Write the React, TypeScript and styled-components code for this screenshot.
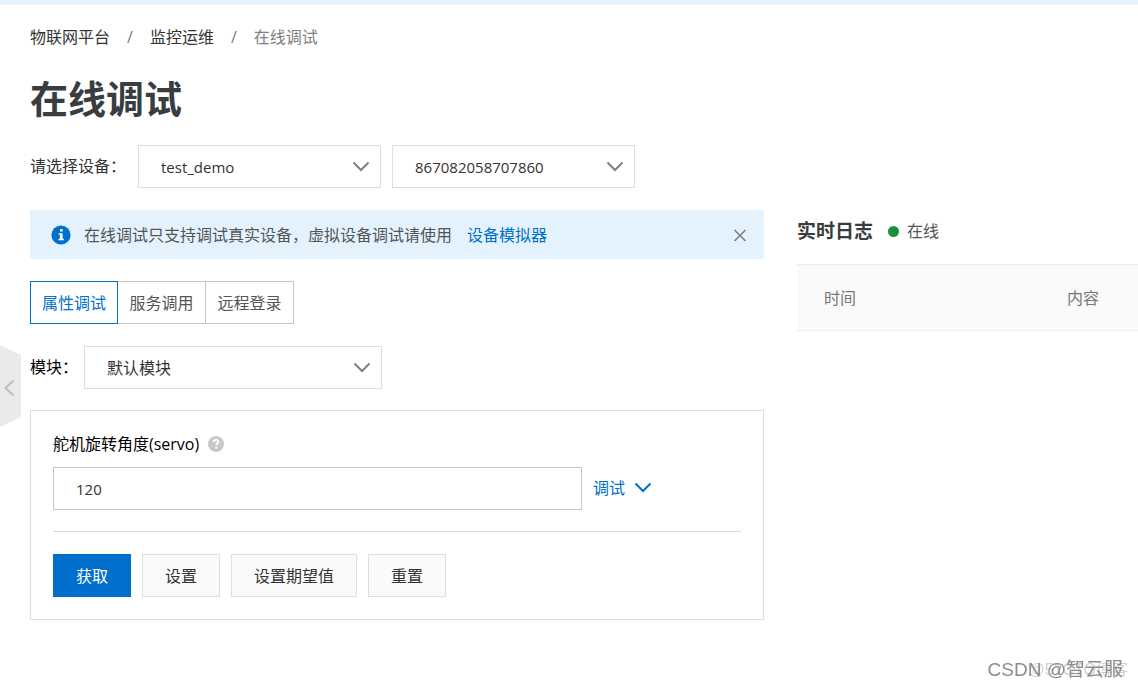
import React, { useState } from "react";
import styled, { createGlobalStyle, css } from "styled-components";

const GlobalStyle = createGlobalStyle`
  *, *::before, *::after { box-sizing: border-box; }
  body {
    margin: 0;
    background: #fff;
    color: #333;
    font-family: "Open Sans", "Noto Sans CJK SC", sans-serif;
    font-size: 16px;
    line-height: 22px;
  }
  button, input, select { font: inherit; color: inherit; margin: 0; }
  a { text-decoration: none; }
`;

const TopStrip = styled.div`
  height: 5px;
  background: #e4f2fe;
`;

const Page = styled.main`
  padding: 21px 0 22px 30px;
`;

const Breadcrumb = styled.nav`
  display: flex;
  gap: 17px;
`;

const Crumb = styled.a`
  color: #333;
`;

const CurrentCrumb = styled.span`
  color: #808080;
`;

const Slash = styled.span`
  color: #808080;
`;

const Title = styled.h1`
  margin: 24px 0 21px;
  font-size: 38px;
  line-height: 52px;
  font-weight: 700;
  color: #373d41;
`;

const FieldRow = styled.div<{ $gap: number }>`
  display: flex;
  align-items: center;
  gap: ${(p) => p.$gap}px;

  label { padding-bottom: 2px; }
`;

const SelectGroup = styled.div`
  display: flex;
  gap: 11px;
`;

const SelectBox = styled.div<{ $width: number }>`
  position: relative;
  width: ${(p) => p.$width}px;

  svg {
    position: absolute;
    right: 11px;
    top: 16px;
    pointer-events: none;
  }
`;

const Select = styled.select<{ $latin?: boolean }>`
  appearance: none;
  display: block;
  width: 100%;
  height: 43px;
  padding: 0 40px 0 22px;
  border: 1px solid #dedede;
  border-radius: 0;
  background: #fff;
  color: #333;
  font-size: ${(p) => (p.$latin ? 15 : 16)}px;
`;

const Columns = styled.div`
  display: grid;
  grid-template-columns: minmax(0, 734fr) minmax(0, 341fr);
  gap: 33px;
  margin-top: 22px;
`;

const DebugColumn = styled.section`
  display: flex;
  flex-direction: column;
`;

const Notice = styled.div`
  display: flex;
  align-items: center;
  height: 49px;
  margin-bottom: 22px;
  padding: 0 17px 0 21px;
  background: #e4f2fe;
  color: #555;
`;

const NoticeText = styled.p`
  flex: 1;
  margin: 0 0 0 13px;
`;

const NoticeLink = styled.a`
  margin-left: 15px;
  color: #0070cc;
`;

const IconButton = styled.button`
  display: flex;
  padding: 0;
  border: 0;
  background: none;
  cursor: pointer;
`;

const Tabs = styled.div`
  display: flex;
  margin-bottom: 22px;
`;

const Tab = styled.button<{ $active: boolean }>`
  min-width: 88px;
  height: 43px;
  padding: 0 11px;
  border: 1px solid #c6c6c6;
  border-left-width: 0;
  background: #fff;
  color: #555;
  cursor: pointer;
  ${(p) =>
    p.$active &&
    css`
      border-color: #0070cc;
      border-left-width: 1px;
      color: #0070cc;
    `}
`;

const ModuleLabel = styled.label`
  color: #000;
`;

const Panel = styled.form`
  margin-top: 21px;
  padding: 22px;
  border: 1px solid #dedede;
`;

const PropertyName = styled.div`
  display: flex;
  align-items: center;
  gap: 9px;
  margin-bottom: 12px;
  color: #000;
`;

const PropertyRow = styled.div`
  display: flex;
  align-items: center;
  gap: 11px;
`;

const ValueInput = styled.input`
  flex: 1;
  min-width: 0;
  height: 43px;
  padding: 0 22px;
  border: 1px solid #c6c6c6;
  border-radius: 0;
  color: #333;
  font-size: 15px;
`;

const DebugMenu = styled.button`
  display: flex;
  align-items: center;
  gap: 9px;
  width: 148px;
  padding: 0 0 2px;
  border: 0;
  background: none;
  color: #0070cc;
  cursor: pointer;
`;

const Divider = styled.hr`
  height: 1px;
  margin: 21px 0 22px;
  border: 0;
  background: #d9d9d9;
`;

const Actions = styled.div`
  display: flex;
  gap: 11px;
`;

const Action = styled.button<{ $primary?: boolean }>`
  height: 43px;
  padding: 0 22px;
  border: 1px solid ${(p) => (p.$primary ? "#0070cc" : "#dedede")};
  background: ${(p) => (p.$primary ? "#0070cc" : "#fafafa")};
  color: ${(p) => (p.$primary ? "#fff" : "#333")};
  cursor: pointer;
`;

const LogColumn = styled.section`
  min-width: 0;
`;

const LogHeader = styled.header`
  display: flex;
  align-items: center;
  height: 42px;
  margin-bottom: 12px;
`;

const LogTitle = styled.h2`
  margin: 0 15px 0 0;
  font-size: 19px;
  font-weight: 700;
  color: #373d41;
`;

const StatusDot = styled.span`
  width: 11px;
  height: 11px;
  margin-right: 8px;
  border-radius: 50%;
  background: #1e8e3e;
`;

const Status = styled.span`
  color: #555;
`;

const LogTable = styled.table`
  width: 100%;
  border-collapse: collapse;
  table-layout: fixed;

  th {
    height: 66px;
    padding: 0 0 0 27px;
    border: solid #ebebeb;
    border-width: 1px 0;
    background: #fafafa;
    color: #777;
    font-weight: 400;
    text-align: left;
  }

  th:first-child { width: 243px; }
`;

const CollapseHandle = styled.button`
  position: fixed;
  left: 0;
  top: 345px;
  padding: 0;
  border: 0;
  background: none;
  cursor: pointer;

  svg { display: block; }
`;

const Watermark = styled.div<{ $back?: boolean }>`
  position: fixed;
  right: ${(p) => (p.$back ? 10 : 15)}px;
  bottom: 6px;
  font-family: "Liberation Sans", "Noto Sans CJK SC", sans-serif;
  font-size: ${(p) => (p.$back ? 16 : 19)}px;
  line-height: 24px;
  white-space: nowrap;
  color: ${(p) => (p.$back ? "#d0d0d0" : "#8c8c8c")};
  pointer-events: none;
`;

const Chevron = ({ color = "#808080" }: { color?: string }) => (
  <svg width="18" height="11" viewBox="0 0 18 11" fill="none" aria-hidden="true">
    <path d="M1.5 1.5 9 9l7.5-7.5" stroke={color} strokeWidth="2" />
  </svg>
);

const InfoIcon = () => (
  <svg width="20" height="20" viewBox="0 0 20 20" aria-hidden="true">
    <circle cx="10" cy="10" r="9.6" fill="#0070cc" />
    <path d="M9 4.2h2.7v2.4H9zM7.6 8.2h4v5.6h1.2v1.5H7.6v-1.5h1.3V9.7H7.6z" fill="#fff" />
  </svg>
);

const HelpIcon = () => (
  <svg width="16" height="16" viewBox="0 0 16 16" fill="none" aria-hidden="true">
    <circle cx="8" cy="8" r="8" fill="#c8c8c8" />
    <path d="M5.7 6.2c0-1.5 1-2.4 2.4-2.4s2.3.8 2.3 2c0 1.6-2.2 1.7-2.2 3.4" stroke="#fff" strokeWidth="1.8" />
    <path d="M7.2 10.6h2v1.9h-2z" fill="#fff" />
  </svg>
);

const CloseIcon = () => (
  <svg width="14" height="14" viewBox="0 0 14 14" aria-hidden="true">
    <path d="m1.5 2 11 11m0-11-11 11" stroke="#808080" strokeWidth="1.7" />
  </svg>
);

const tabs = ["属性调试", "服务调用", "远程登录"];

export default function App() {
  const [activeTab, setActiveTab] = useState(0);
  const [value, setValue] = useState("120");

  return (
    <>
      <GlobalStyle />
      <TopStrip />
      <Page>
        <Breadcrumb aria-label="breadcrumb">
          <Crumb href="#">物联网平台</Crumb>
          <Slash>/</Slash>
          <Crumb href="#">监控运维</Crumb>
          <Slash>/</Slash>
          <CurrentCrumb>在线调试</CurrentCrumb>
        </Breadcrumb>

        <Title>在线调试</Title>

        <FieldRow $gap={12}>
          <label htmlFor="product">请选择设备：</label>
          <SelectGroup>
            <SelectBox $width={243}>
              <Select id="product" $latin>
                <option>test_demo</option>
              </Select>
              <Chevron />
            </SelectBox>
            <SelectBox $width={243}>
              <Select aria-label="设备" $latin>
                <option>867082058707860</option>
              </Select>
              <Chevron />
            </SelectBox>
          </SelectGroup>
        </FieldRow>

        <Columns>
          <DebugColumn>
            <Notice>
              <InfoIcon />
              <NoticeText>
                在线调试只支持调试真实设备，虚拟设备调试请使用
                <NoticeLink href="#">设备模拟器</NoticeLink>
              </NoticeText>
              <IconButton type="button" aria-label="关闭">
                <CloseIcon />
              </IconButton>
            </Notice>

            <Tabs role="tablist">
              {tabs.map((name, i) => (
                <Tab
                  key={name}
                  type="button"
                  role="tab"
                  aria-selected={i === activeTab}
                  $active={i === activeTab}
                  onClick={() => setActiveTab(i)}
                >
                  {name}
                </Tab>
              ))}
            </Tabs>

            <FieldRow $gap={6}>
              <ModuleLabel htmlFor="module">模块：</ModuleLabel>
              <SelectBox $width={298}>
                <Select id="module">
                  <option>默认模块</option>
                </Select>
                <Chevron />
              </SelectBox>
            </FieldRow>

            <Panel onSubmit={(e) => e.preventDefault()}>
              <PropertyName>
                <label htmlFor="servo">舵机旋转角度(servo)</label>
                <HelpIcon />
              </PropertyName>
              <PropertyRow>
                <ValueInput id="servo" value={value} onChange={(e) => setValue(e.target.value)} />
                <DebugMenu type="button">
                  调试
                  <Chevron color="#0070cc" />
                </DebugMenu>
              </PropertyRow>
              <Divider />
              <Actions>
                <Action type="button" $primary>获取</Action>
                <Action type="button">设置</Action>
                <Action type="button">设置期望值</Action>
                <Action type="button">重置</Action>
              </Actions>
            </Panel>
          </DebugColumn>

          <LogColumn>
            <LogHeader>
              <LogTitle>实时日志</LogTitle>
              <StatusDot />
              <Status>在线</Status>
            </LogHeader>
            <LogTable>
              <thead>
                <tr>
                  <th scope="col">时间</th>
                  <th scope="col">内容</th>
                </tr>
              </thead>
            </LogTable>
          </LogColumn>
        </Columns>
      </Page>

      <CollapseHandle type="button" aria-label="收起">
        <svg width="21" height="82" viewBox="0 0 21 82" fill="none" aria-hidden="true">
          <path d="M0 0 21 10v62L0 82z" fill="#eaeaea" />
          <path d="m13.5 35.5-8 7.5 8 7.5" stroke="#bfbfbf" strokeWidth="2" />
        </svg>
      </CollapseHandle>

      <Watermark $back>@51CTO博客</Watermark>
      <Watermark>CSDN @智云服</Watermark>
    </>
  );
}
